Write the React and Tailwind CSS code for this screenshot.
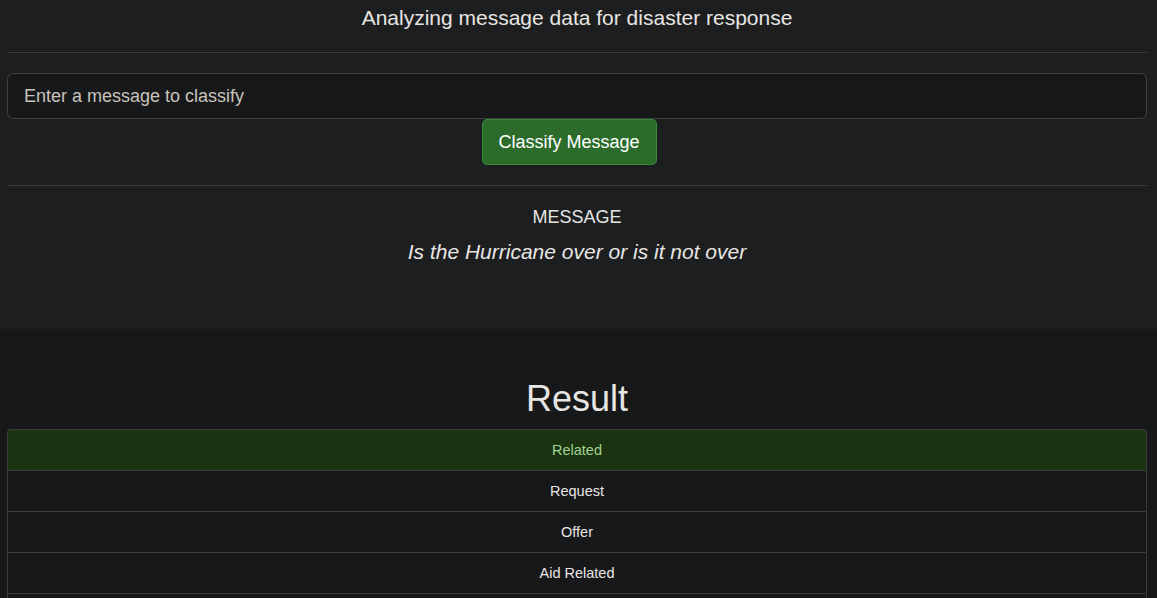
import React from 'react'

const labels = ['Related', 'Request', 'Offer', 'Aid Related']

export default function App() {
  return (
    <div className="min-h-screen bg-[#17181a] text-[#e8e6e3]" style={{ fontFamily: '"Liberation Sans", Arial, sans-serif' }}>
      <div className="bg-[#1d1e20] h-[329px]">
        <div className="w-[1140px] ml-[7px]">
          <h1 className="text-[21px] leading-[36px] text-center">Analyzing message data for disaster response</h1>
          <hr className="mt-[16px] border-t border-[#3a3c3e]" />
          <form className="mt-[20px]" onSubmit={(e) => e.preventDefault()}>
            <input
              type="text"
              placeholder="Enter a message to classify"
              className="w-full h-[46px] px-4 text-[18px] bg-[#17181a] border border-[#3d3f42] rounded-[6px] placeholder:text-[#c8c3bc] outline-none"
            />
            <div className="flex justify-center">
              <button type="submit" className="h-[46px] w-[175px] -ml-[16px] text-[18px] text-white bg-[#2b6c2b] border border-[#3a8a3a] rounded-[5px]">
                Classify Message
              </button>
            </div>
          </form>
          <hr className="mt-[20px] border-t border-[#3a3c3e]" />
          <div className="text-center">
            <div className="mt-[18px] text-[18px] leading-[26px]">MESSAGE</div>
            <div className="mt-[8px] text-[21px] leading-[28px] italic">Is the Hurricane over or is it not over</div>
          </div>
        </div>
      </div>
      <div className="w-[1140px] ml-[7px]">
        <h2 className="mt-[48px] text-[36px] leading-[44px] text-center">Result</h2>
        <div className="mt-[8px] border-x border-t border-[#3a3c3e] rounded-t-[4px] overflow-hidden">
          {labels.map((l, i) => (
            <div
              key={l}
              className={
                i === 0
                  ? 'h-[41px] pt-[2px] flex items-center justify-center text-[14.5px] bg-[#1c3311] text-[#9fd38f] border-b border-[#3a3c3e]'
                  : 'h-[41px] pt-[2px] flex items-center justify-center text-[14.5px] border-b border-[#3a3c3e]'
              }
            >
              {l}
            </div>
          ))}
          <div className="h-[4px]" />
        </div>
      </div>
    </div>
  )
}
